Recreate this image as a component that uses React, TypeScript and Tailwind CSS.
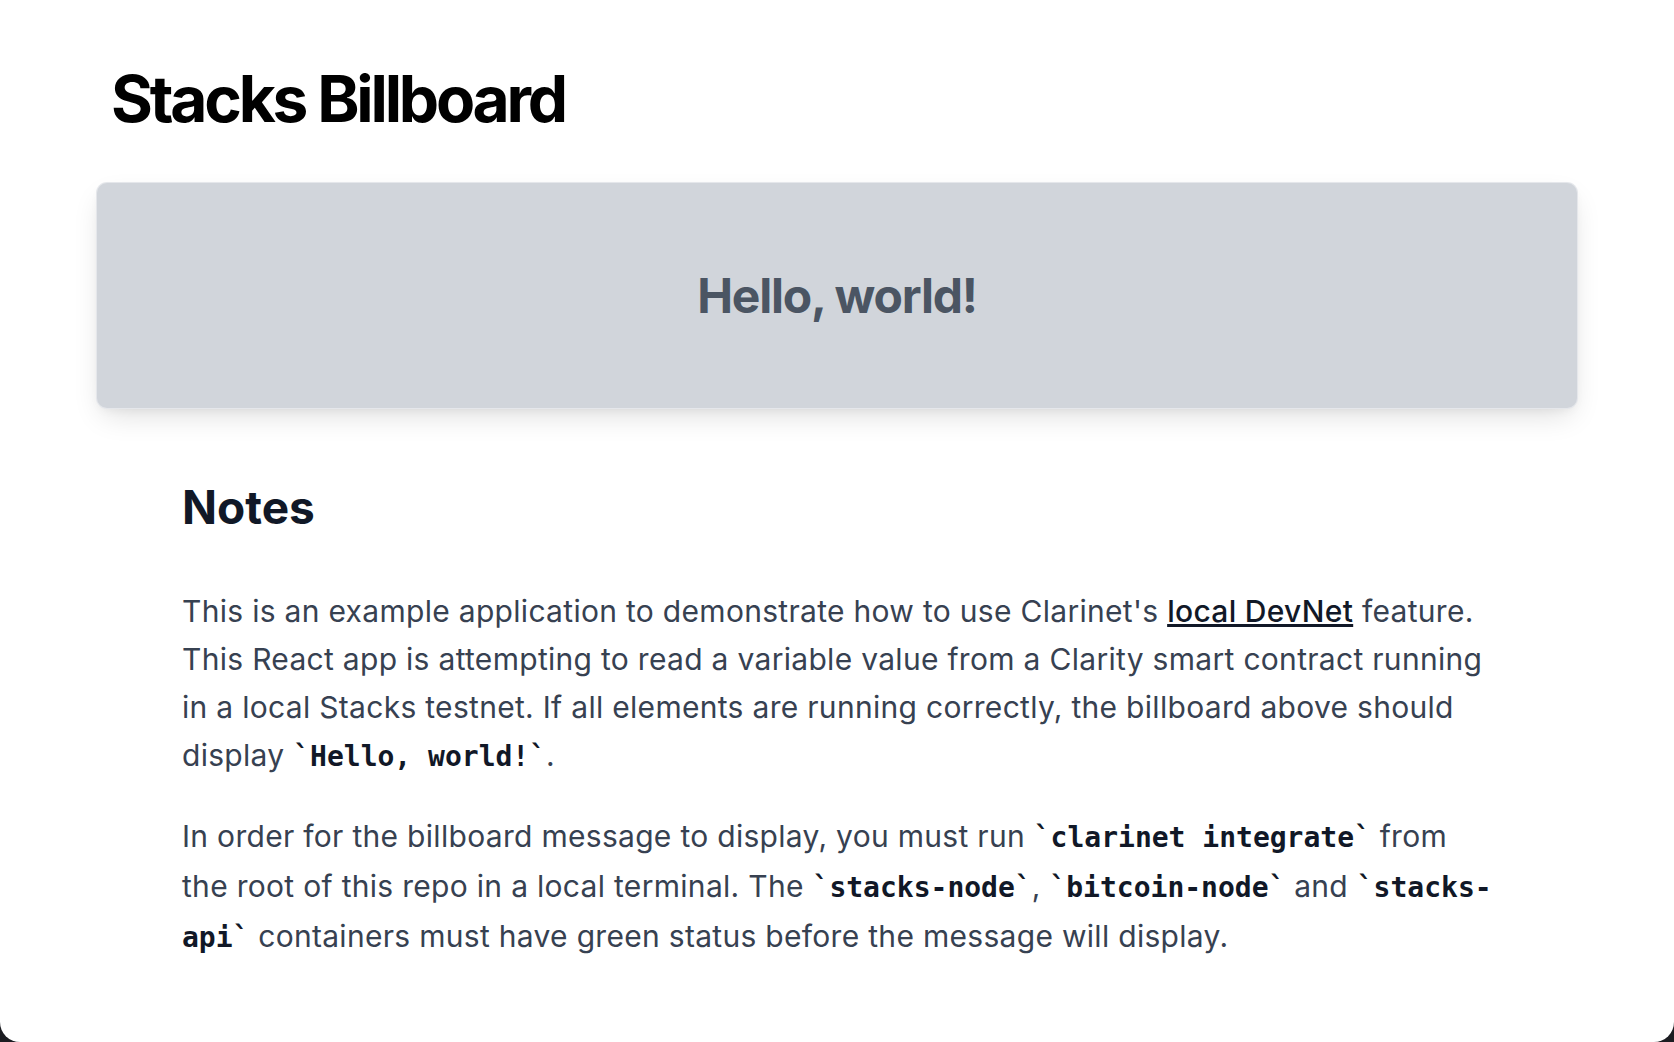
import React from 'react';

const Code: React.FC<{ children: React.ReactNode }> = ({ children }) => (
  <code className="font-['DejaVu_Sans_Mono',monospace] text-[28px] font-bold tracking-normal text-[#111827]">
    `{children}`
  </code>
);

const App: React.FC = () => {
  return (
    <div className="h-screen bg-[#1c1d22]">
      <div className="h-full overflow-hidden rounded-b-[20px] bg-white font-['Inter',sans-serif]">
        <div className="px-[97px] pt-[67px]">
          {/* Header */}
          <h1 className="pl-[14px] text-[64px] font-bold leading-none tracking-[-0.05em] text-black">
            Stacks Billboard
          </h1>

          {/* Billboard */}
          <div className="mt-[52px] flex h-[225px] items-center justify-center rounded-[10px] bg-[#d1d5db] shadow-[0_12px_30px_-6px_rgba(0,0,0,0.14),0_4px_12px_-4px_rgba(0,0,0,0.08)] ring-1 ring-[#e5e7eb]">
            <h2 className="text-5xl font-bold tracking-tight text-[#4b5563]">Hello, world!</h2>
          </div>

          {/* Notes */}
          <div className="px-[85px] pt-[72px]">
            <h2 className="text-[46px] font-bold leading-[54px] text-[#111827]">Notes</h2>
            <p className="mt-[53px] text-[30px] leading-[48px] tracking-[0.01em] text-[#374151]">
              This is an example application to demonstrate how to use Clarinet's{' '}
              <a href="#" className="font-medium text-[#111827] underline">
                local DevNet
              </a>{' '}
              feature. This React app is attempting to read a variable value from a Clarity smart
              contract running in a local Stacks testnet. If all elements are running correctly, the
              billboard above should display <Code>Hello, world!</Code>.
            </p>
            <p className="mt-[31px] text-[30px] leading-[48px] tracking-[0.01em] text-[#374151]">
              In order for the billboard message to display, you must run{' '}
              <Code>clarinet integrate</Code> from the root of this repo in a local terminal. The{' '}
              <Code>stacks-node</Code>, <Code>bitcoin-node</Code> and <Code>stacks-api</Code>{' '}
              containers must have green status before the message will display.
            </p>
          </div>
        </div>
      </div>
    </div>
  );
};

export default App;
